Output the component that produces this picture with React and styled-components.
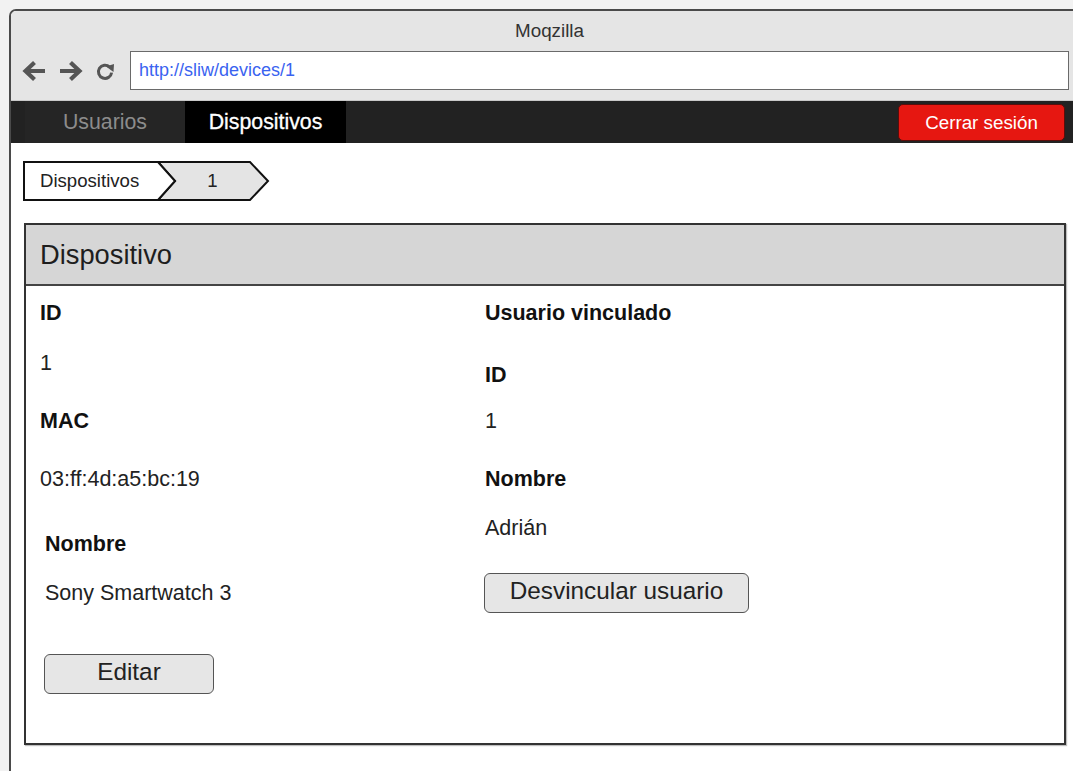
import React from "react";
import styled, { createGlobalStyle } from "styled-components";

const Global = createGlobalStyle`
  html, body { margin: 0; padding: 0; }
  body {
    background: #f2f2f2;
    font-family: "Liberation Sans", Arial, sans-serif;
    color: #1e1e1e;
    overflow: hidden;
  }
`;

const Window = styled.div`
  margin: 9px 0 0 9px;
  height: calc(100vh - 9px);
  box-sizing: border-box;
  border-left: 2px solid #4a4a4a;
  border-top: 2px solid #4a4a4a;
  border-top-left-radius: 7px;
  background: #fff;
  overflow: hidden;
  display: flex;
  flex-direction: column;
`;

const TitleBar = styled.div`
  background: #e5e5e5;
  border-bottom: 1px solid #c9c9c9;
  padding-bottom: 10px;
`;

const Title = styled.div`
  height: 40px;
  display: flex;
  align-items: center;
  justify-content: center;
  padding-left: 15px;
  font-size: 18.8px;
  color: #333;
`;

const AddressRow = styled.div`
  display: flex;
  align-items: center;
  padding-left: 11px;
  padding-right: 4px;
`;

const NavIcon = styled.svg`
  flex: none;
  margin-right: ${(p) => p.$gap}px;
`;

const Address = styled.div`
  flex: 1;
  height: 39px;
  box-sizing: border-box;
  background: #fff;
  border: 1.5px solid #6a6a6a;
  display: flex;
  align-items: center;
  padding-left: 8px;
  font-size: 18px;
  color: #3a63f0;
`;

const NavBar = styled.div`
  height: 42px;
  background: #222;
  display: flex;
  align-items: stretch;
  padding-left: 14px;
  padding-right: 8px;
`;

const Tab = styled.div`
  width: ${(p) => p.$w}px;
  display: flex;
  align-items: center;
  justify-content: center;
  font-size: 21.3px;
  background: ${(p) => (p.$active ? "#000" : "#252525")};
  color: ${(p) => (p.$active ? "#fff" : "#8c8c8c")};
  -webkit-text-stroke: ${(p) => (p.$active ? "0.3px #fff" : "0")};
`;

const Spacer = styled.div`
  flex: 1;
`;

const LogoutButton = styled.button`
  align-self: center;
  width: 167px;
  height: 37px;
  margin-top: 1px;
  border: 1px solid #5a0d0a;
  border-radius: 5px;
  background: #e61711;
  color: #fff;
  font-family: inherit;
  font-size: 18.8px;
  padding: 0;
`;

const Content = styled.div`
  padding: 18px 7px 0 12px;
`;

const Breadcrumb = styled.div`
  position: relative;
  width: 248px;
  height: 40px;
  display: flex;
  align-items: center;
`;

const CrumbShapes = styled.svg`
  position: absolute;
  left: 0;
  top: 0;
`;

const Crumb = styled.div`
  position: relative;
  box-sizing: border-box;
  width: ${(p) => p.$w}px;
  padding-left: ${(p) => p.$pad || 0}px;
  text-align: ${(p) => (p.$center ? "center" : "left")};
  font-size: 18.6px;
  color: #222;
`;

const Panel = styled.section`
  margin: 22px 0 0 1px;
  height: 522px;
  box-sizing: border-box;
  border: 2px solid #333;
  box-shadow: 1px 1px 1px rgba(0, 0, 0, 0.25);
  display: flex;
  flex-direction: column;
`;

const PanelHeader = styled.header`
  height: 59px;
  background: #d6d6d6;
  border-bottom: 2px solid #444;
  display: flex;
  align-items: center;
  padding-left: 14px;
  font-size: 27.3px;
  color: #1e1e1e;
`;

const PanelBody = styled.div`
  display: grid;
  grid-template-columns: 445px 1fr;
  padding-left: 14px;
`;

const Column = styled.div`
  display: flex;
  flex-direction: column;
  align-items: flex-start;
`;

const Label = styled.div`
  margin-top: ${(p) => p.$top}px;
  margin-left: ${(p) => p.$indent || 0}px;
  height: 24px;
  line-height: 24px;
  font-size: 21.5px;
  font-weight: bold;
  color: #111;
`;

const Value = styled.div`
  margin-top: ${(p) => p.$top}px;
  margin-left: ${(p) => p.$indent || 0}px;
  height: 24px;
  line-height: 24px;
  font-size: 21.5px;
  color: #222;
`;

const Button = styled.button`
  margin-top: ${(p) => p.$top}px;
  margin-left: ${(p) => p.$indent || 0}px;
  width: ${(p) => p.$w}px;
  height: ${(p) => p.$h}px;
  box-sizing: border-box;
  border: 1.5px solid #555;
  border-radius: 6px;
  background: #e6e6e6;
  font-family: inherit;
  font-size: 24.3px;
  color: #222;
  padding: 0;
  line-height: 1;
  padding-bottom: 3px;
`;

const ArrowLeft = () => (
  <NavIcon width="25" height="22" viewBox="0 0 25 22" $gap={11}>
    <path d="M23 11H4M12.5 2.5L3.5 11L12.5 19.5" fill="none" stroke="#555" strokeWidth="4.2" />
  </NavIcon>
);

const ArrowRight = () => (
  <NavIcon width="25" height="22" viewBox="0 0 25 22" $gap={13}>
    <path d="M2 11H21M12.5 2.5L21.5 11L12.5 19.5" fill="none" stroke="#555" strokeWidth="4.2" />
  </NavIcon>
);

const Reload = () => (
  <NavIcon width="19" height="20" viewBox="0 0 19 20" $gap={15}>
    <path d="M13.6 6A6.6 6.6 0 1 0 15.6 11.6" fill="none" stroke="#555" strokeWidth="3" />
    <polygon points="10,5.5 18,3 17.5,11" fill="#555" />
  </NavIcon>
);

export default function App() {
  return (
    <>
      <Global />
      <Window>
        <TitleBar>
          <Title>Moqzilla</Title>
          <AddressRow>
            <ArrowLeft />
            <ArrowRight />
            <Reload />
            <Address>http://sliw/devices/1</Address>
          </AddressRow>
        </TitleBar>

        <NavBar>
          <Tab $w={160}>Usuarios</Tab>
          <Tab $w={161} $active>
            Dispositivos
          </Tab>
          <Spacer />
          <LogoutButton>Cerrar sesión</LogoutButton>
        </NavBar>

        <Content>
          <Breadcrumb>
            <CrumbShapes width="248" height="40" viewBox="0 0 248 40">
              <polygon
                points="135,1 227,1 245,20 227,39 135,39 152,20"
                fill="#e4e4e4"
                stroke="#111"
                strokeWidth="2"
              />
              <polygon
                points="1,1 135,1 152,20 135,39 1,39"
                fill="#fff"
                stroke="#111"
                strokeWidth="2"
              />
            </CrumbShapes>
            <Crumb $w={152} $pad={17}>
              Dispositivos
            </Crumb>
            <Crumb $w={75} $center>
              1
            </Crumb>
          </Breadcrumb>

          <Panel>
            <PanelHeader>Dispositivo</PanelHeader>
            <PanelBody>
              <Column>
                <Label $top={15}>ID</Label>
                <Value $top={26}>1</Value>
                <Label $top={34}>MAC</Label>
                <Value $top={34}>03:ff:4d:a5:bc:19</Value>
                <Label $top={41} $indent={5}>
                  Nombre
                </Label>
                <Value $top={25} $indent={5}>
                  Sony Smartwatch 3
                </Value>
                <Button $top={49} $indent={4} $w={170} $h={40}>
                  Editar
                </Button>
              </Column>
              <Column>
                <Label $top={15}>Usuario vinculado</Label>
                <Label $top={38}>ID</Label>
                <Value $top={22}>1</Value>
                <Label $top={34}>Nombre</Label>
                <Value $top={25}>Adrián</Value>
                <Button $top={33} $indent={-1} $w={265} $h={40}>
                  Desvincular usuario
                </Button>
              </Column>
            </PanelBody>
          </Panel>
        </Content>
      </Window>
    </>
  );
}
